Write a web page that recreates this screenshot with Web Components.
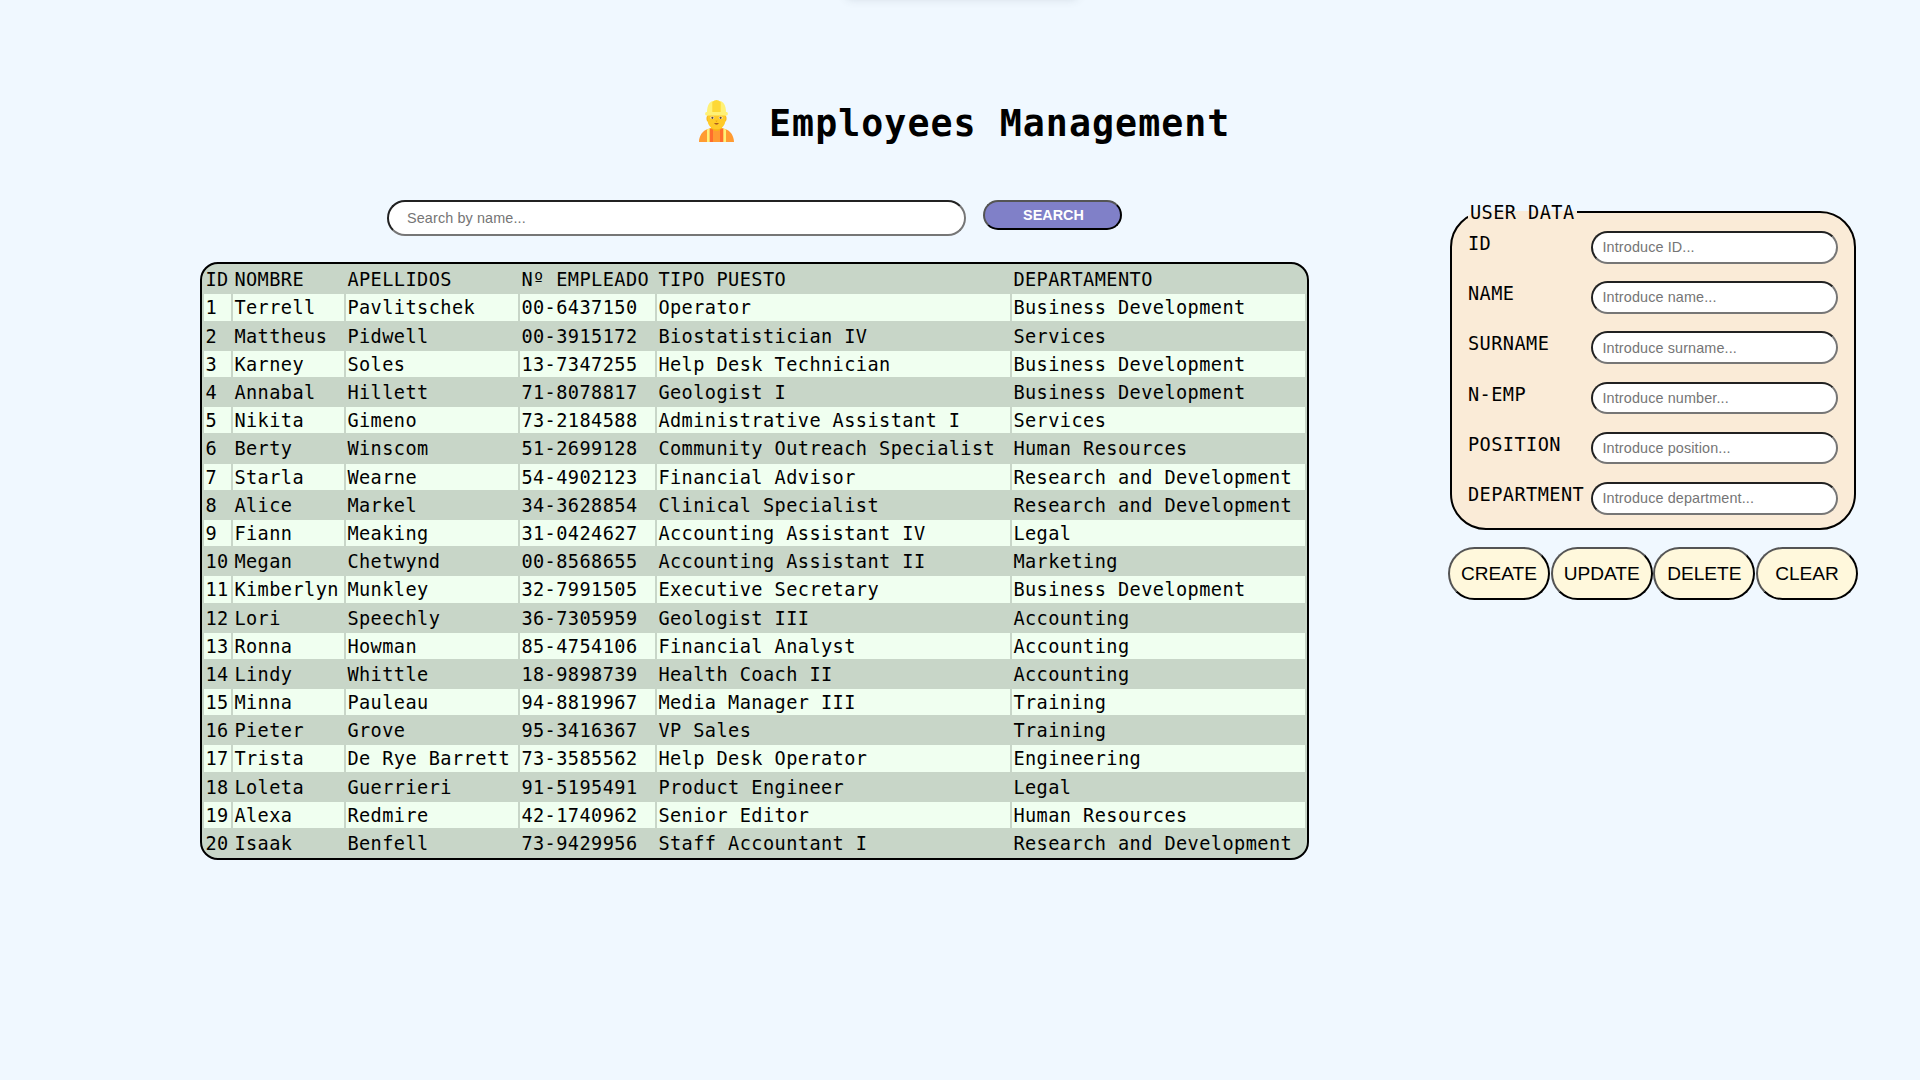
<!DOCTYPE html>
<html lang="en">
<head>
<meta charset="utf-8">
<title>Employees Management</title>
<style>
body{margin:0;background:#f0f8ff;height:1080px;overflow:hidden;font-family:"DejaVu Sans Mono",monospace;color:#000}
</style>
</head>
<body>
<employees-app></employees-app>
<script>
const define=(name,html,setup)=>{
  const t=document.createElement('template');t.innerHTML=html;
  customElements.define(name,class extends HTMLElement{
    constructor(){super();this.attachShadow({mode:'open'})}
    connectedCallback(){
      if(this.shadowRoot.childNodes.length)return;
      this.shadowRoot.append(t.content.cloneNode(true));
      if(setup)setup(this,this.shadowRoot);
    }
  });
};
define('worker-icon',`<style>:host{display:block;width:35px;height:42px}svg{display:block}</style>
<svg width="35" height="42" viewBox="0 0 35 42">
<path d="M0 42C0 36 3.5 30.5 9 29L12 28H23L26 29C31.5 30.5 35 36 35 42Z" fill="#ff9b32"/>
<path d="M12 24H23V29Q17.5 33 12 29Z" fill="#f9b517"/>
<path d="M8 29.4L10.8 28.6V42H8ZM24.2 28.6L27 29.4V42H24.2Z" fill="#fff176"/>
<path d="M10.8 28.6L14 29.5V42H10.8ZM24.2 28.6L21 29.5V42H24.2Z" fill="#ff6d2d"/>
<rect x="7.5" y="15" width="20" height="7" rx="3" fill="#f9b517"/>
<path d="M8.6 13H26.4V20C26.4 26 22 29.3 17.5 29.3S8.6 26 8.6 20Z" fill="#ffca28"/>
<ellipse cx="13.3" cy="17.8" rx="2" ry="1.3" fill="#fff3d0"/><ellipse cx="21.7" cy="17.8" rx="2" ry="1.3" fill="#fff3d0"/>
<circle cx="13.4" cy="17.8" r="1.1" fill="#5b443b"/><circle cx="21.6" cy="17.8" r="1.1" fill="#5b443b"/>
<path d="M16.3 20.7H18.7L17.5 21.7Z" fill="#e59600"/>
<path d="M15 23.3H20Q17.5 25.8 15 23.3Z" fill="#8f3b20"/>
<path d="M8 12.5C8 4.5 11 1.5 14 1H21C24 1.5 27 4.5 27 12.5Z" fill="#fff176"/>
<path d="M13.3 12V2.2Q17.5-2 21.7 2.2V12Z" fill="#fdd835"/>
<rect x="6.3" y="12" width="22.4" height="3.6" rx="1.3" fill="#fff176"/>
</svg>`);
define('page-heading',`<style>:host{display:flex;align-items:flex-start;padding:100px 0 0 699px;height:100px}
h1{margin:-1px 0 0 35px;font-size:36.6px;line-height:50px;letter-spacing:1.05px;white-space:pre}</style>
<worker-icon></worker-icon><h1><slot></slot></h1>`);
define('text-field',`<style>:host{display:block}
input{display:block;box-sizing:border-box;width:100%;height:100%;margin:0;border:2px inset rgb(118,118,118);border-radius:20px;background:#fff;padding:0 0 0 var(--pad,9.5px);font:14.4px "Liberation Sans",Arial,sans-serif;letter-spacing:.12px}</style>
<input type="text">`,(h,r)=>{r.querySelector('input').placeholder=h.getAttribute('hint')});
define('pill-button',`<style>:host{display:block}
button{display:block;box-sizing:border-box;width:100%;height:100%;margin:0;padding:0 0 0 var(--shift,0px);color:var(--fg,#000);background:var(--bg,#fff8dc);border:2px outset #000;border-radius:var(--r,27px);font:var(--font,19.1px "Liberation Sans",Arial,sans-serif)}</style>
<button><slot></slot></button>`);
define('search-bar',`<style>:host{display:flex;align-items:flex-start;gap:17px;margin-left:187px;height:62.3px}
text-field{width:579px;height:36px;--pad:18px}
pill-button{width:139px;height:30px;--bg:#8080c8;--fg:#fff;--r:15px;--shift:2px;--font:bold 14.4px "Liberation Sans",Arial,sans-serif}</style>
<text-field hint="Search by name..."></text-field><pill-button>SEARCH</pill-button>`);
define('employee-row',`<style>:host{display:grid;grid-template-columns:27px 111px 172px 135px 353px 293px;column-gap:2px;height:26.19px;font-size:18.6px;letter-spacing:.42px;line-height:28px;white-space:pre}
span{background:var(--cell,transparent);padding-left:1.4px;height:26.19px}</style>`,(h,r)=>{
  for(const c of h.getAttribute('cells').split('|')){const s=document.createElement('span');s.textContent=c;r.append(s)}
});
define('employee-table',`<style>:host{display:flex;flex-direction:column;gap:2px;box-sizing:border-box;width:1109px;border:2px solid #000;border-radius:18px;background:#c8d6c8;padding:2px}
employee-row:nth-of-type(even){--cell:#f0fff0}</style>`,(h,r)=>{
`ID|NOMBRE|APELLIDOS|Nº EMPLEADO|TIPO PUESTO|DEPARTAMENTO
1|Terrell|Pavlitschek|00-6437150|Operator|Business Development
2|Mattheus|Pidwell|00-3915172|Biostatistician IV|Services
3|Karney|Soles|13-7347255|Help Desk Technician|Business Development
4|Annabal|Hillett|71-8078817|Geologist I|Business Development
5|Nikita|Gimeno|73-2184588|Administrative Assistant I|Services
6|Berty|Winscom|51-2699128|Community Outreach Specialist|Human Resources
7|Starla|Wearne|54-4902123|Financial Advisor|Research and Development
8|Alice|Markel|34-3628854|Clinical Specialist|Research and Development
9|Fiann|Meaking|31-0424627|Accounting Assistant IV|Legal
10|Megan|Chetwynd|00-8568655|Accounting Assistant II|Marketing
11|Kimberlyn|Munkley|32-7991505|Executive Secretary|Business Development
12|Lori|Speechly|36-7305959|Geologist III|Accounting
13|Ronna|Howman|85-4754106|Financial Analyst|Accounting
14|Lindy|Whittle|18-9898739|Health Coach II|Accounting
15|Minna|Pauleau|94-8819967|Media Manager III|Training
16|Pieter|Grove|95-3416367|VP Sales|Training
17|Trista|De Rye Barrett|73-3585562|Help Desk Operator|Engineering
18|Loleta|Guerrieri|91-5195491|Product Engineer|Legal
19|Alexa|Redmire|42-1740962|Senior Editor|Human Resources
20|Isaak|Benfell|73-9429956|Staff Accountant I|Research and Development`.split('\n').forEach(l=>{
    const e=document.createElement('employee-row');e.setAttribute('cells',l);r.append(e)});
});
define('form-row',`<style>:host{display:flex;justify-content:space-between;height:50.2px}
label{font-size:18.6px;letter-spacing:.42px;line-height:26px}
text-field{width:247px;height:32.6px}</style><label></label>`,(h,r)=>{
  r.querySelector('label').textContent=h.getAttribute('label');
  const f=document.createElement('text-field');
  f.setAttribute('hint',h.getAttribute('hint'));r.append(f);
});
define('user-form',`<style>:host{display:block;width:410px;margin-left:139px}
fieldset{box-sizing:border-box;width:406px;height:330px;margin:0 0 0 2px;padding:7px 16px 0;border:2px solid #000;border-radius:36px;background:#faebd7}
legend{padding:0 2px;height:24px;line-height:26px;font-size:18.6px;letter-spacing:.42px}
nav{display:flex;gap:.7px;margin-top:17px}
pill-button{flex:1;height:53px}</style>
<fieldset><legend>USER DATA</legend>
<form-row label="ID" hint="Introduce ID..."></form-row>
<form-row label="NAME" hint="Introduce name..."></form-row>
<form-row label="SURNAME" hint="Introduce surname..."></form-row>
<form-row label="N-EMP" hint="Introduce number..."></form-row>
<form-row label="POSITION" hint="Introduce position..."></form-row>
<form-row label="DEPARTMENT" hint="Introduce department..."></form-row>
</fieldset>
<nav><pill-button>CREATE</pill-button><pill-button>UPDATE</pill-button><pill-button>DELETE</pill-button><pill-button>CLEAR</pill-button></nav>`);
define('employees-app',`<style>:host{display:block;position:relative}
.shade{position:absolute;top:-14px;left:846px;width:232px;height:11px;border-radius:8px;box-shadow:0 2px 10px rgba(60,70,90,.17)}
main{display:flex;padding-left:200px;align-items:flex-start}</style>
<div class="shade"></div>
<page-heading>Employees Management</page-heading>
<main><section><search-bar></search-bar><employee-table></employee-table></section><user-form></user-form></main>`);
</script>
</body>
</html>
